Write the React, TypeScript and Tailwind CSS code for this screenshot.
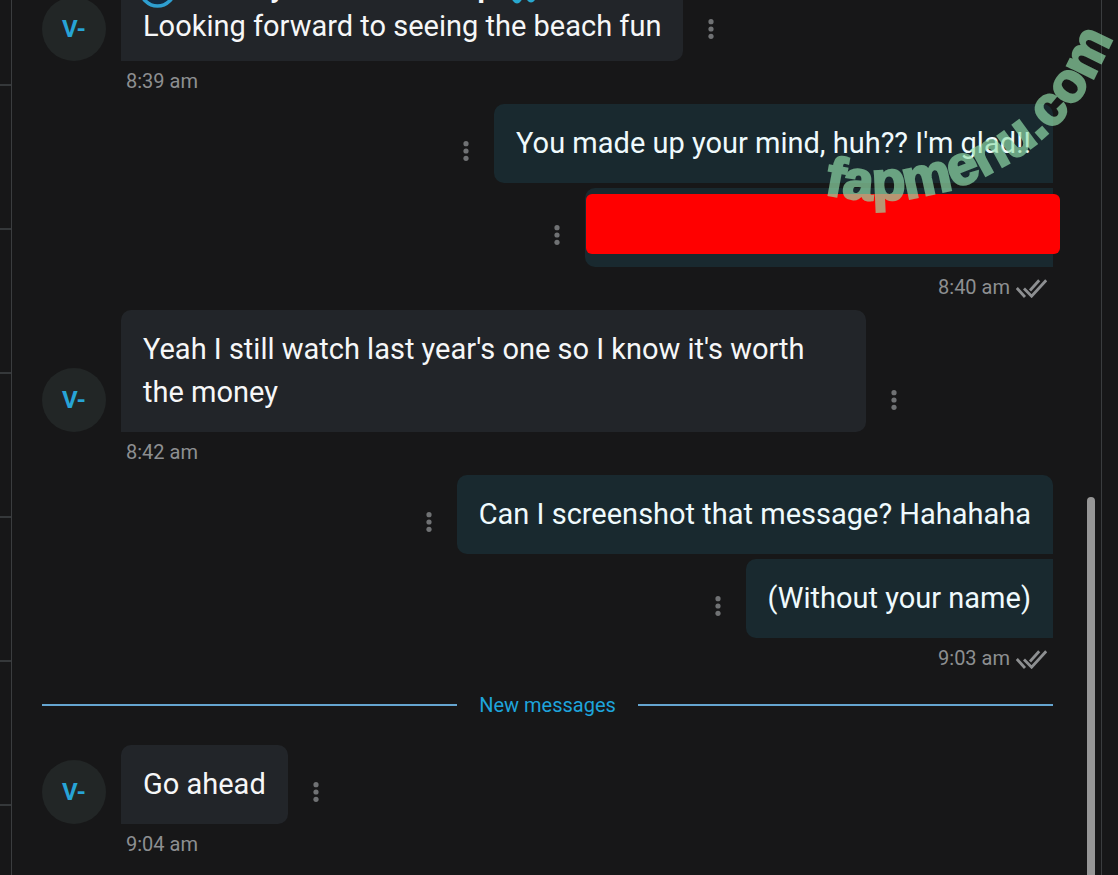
import React from "react";

function Dots() {
  return (
    <button aria-label="Message options" className="flex h-16 w-14 shrink-0 items-center justify-center text-[#707274]">
      <svg width="6" height="22" viewBox="0 0 6 22" fill="currentColor" aria-hidden="true">
        <circle cx="3" cy="3.7" r="2.6" />
        <circle cx="3" cy="11" r="2.6" />
        <circle cx="3" cy="18.3" r="2.6" />
      </svg>
    </button>
  );
}

function Avatar() {
  return (
    <div className="flex size-16 shrink-0 items-center justify-center rounded-full bg-[#222626] text-[24px] font-bold text-[#27a4d6]">
      V-
    </div>
  );
}

function Incoming({ time, clipped, children }: { time: string; clipped?: boolean; children: React.ReactNode }) {
  return (
    <div>
      <div className="flex items-end">
        <Avatar />
        <div
          className={`ml-[15px] max-w-[745px] rounded-[10px] rounded-bl-none bg-[#222529] px-[22px] pt-[18px] text-[#f6f7f8] ${clipped ? "pb-[13px]" : "pb-[18px]"}`}
        >
          {children}
        </div>
        <Dots />
      </div>
      <p className="mb-[2px] ml-[84px] text-[20px] leading-[41px] text-[#8d8f91]">{time}</p>
    </div>
  );
}

function Sent({ first, redacted, children }: { first?: boolean; redacted?: boolean; children?: React.ReactNode }) {
  return (
    <div className="flex items-end justify-end">
      <Dots />
      <div
        className={`relative rounded-l-[10px] bg-[#19292f] px-[22px] pt-[18px] pb-[18px] text-[#effafd] ${first ? "rounded-tr-[10px]" : ""} ${redacted ? "h-[79px] w-[468px]" : ""}`}
      >
        {children}
        {redacted && <div className="absolute -right-[7px] bottom-[13px] left-px h-[60px] rounded-[6px] bg-[#ff0000]" />}
      </div>
    </div>
  );
}

function Receipt({ time }: { time: string }) {
  return (
    <div className="mb-[2px] flex items-center justify-end gap-[6px] pr-[6px] text-[20px] leading-[41px] text-[#8d8f91]">
      <span>{time}</span>
      <svg width="31" height="20" viewBox="0 0 31 20" fill="none" stroke="currentColor" strokeWidth="2.8" role="img" aria-label="Read">
        <path d="M.8 10 9 19M8 10.5 15.6 18.2 30.2 2.2M14 12.5 23.2 2.2" />
      </svg>
    </div>
  );
}

function Watermark() {
  return (
    <svg
      width="318"
      height="230"
      viewBox="800 0 318 230"
      className="pointer-events-none absolute top-0 right-0 overflow-visible"
    >
      <path id="arc" d="M824 194A250 250 0 0 0 1128 -50" fill="none" />
      <text className="font-['Liberation_Sans',sans-serif] text-[55px] font-bold" fill="#95e2ad" stroke="#95e2ad" strokeWidth="2.4" opacity="0.66">
        <textPath href="#arc">fapmenu.com</textPath>
      </text>
    </svg>
  );
}

const ticks = [229, 373, 517, 661, 805];

export default function App() {
  return (
    <div className="relative flex h-screen overflow-hidden bg-[#171718] font-[Roboto,sans-serif] text-[29px] leading-[43px]">
      <aside className="w-3 shrink-0 border-r border-[#3b3d3f]">
        <div className="h-[86px] border-b-2 border-[#35383a]" />
        {ticks.map((t) => (
          <div key={t} className="h-36 border-b-2 border-[#35383a]" />
        ))}
      </aside>
      <main className="flex min-w-0 flex-1 flex-col pr-[34px] pl-[30px]">
        <div className="-mt-[49px]">
          <Incoming time="8:39 am" clipped>
            <div className="flex h-9 leading-9 font-bold">
              <svg width="30" height="36" viewBox="0 0 30 36" className="overflow-visible" aria-hidden="true">
                <circle cx="14.5" cy="20" r="17" fill="#12293f" stroke="#2e9fd0" strokeWidth="3.6" />
              </svg>
              <span className="ml-[97px]">y</span>
              <span className="ml-[193px]">p</span>
              <svg width="28" height="36" viewBox="0 0 28 36" className="ml-4 overflow-visible" fill="#28a8cf" aria-hidden="true">
                <path d="M-1 26 3 32Q7 37 11 32L15 26ZM13 26 17 31Q21 36 25 31L29 26Z" />
              </svg>
            </div>
            <p>Looking forward to seeing the beach fun</p>
          </Incoming>
        </div>
        <div className="flex flex-col gap-[5px]">
          <Sent first>You made up your mind, huh?? I'm glad!!</Sent>
          <Sent redacted />
        </div>
        <Receipt time="8:40 am" />
        <Incoming time="8:42 am">
          <p>Yeah I still watch last year's one so I know it's worth the money</p>
        </Incoming>
        <div className="flex flex-col gap-[5px]">
          <Sent first>Can I screenshot that message? Hahahaha</Sent>
          <Sent>(Without your name)</Sent>
        </div>
        <Receipt time="9:03 am" />
        <div className="mt-[9px] mb-[25px] flex items-center gap-[22px] text-[20px] leading-[30px] text-[#1ea4dc]">
          <div className="h-[2px] flex-1 bg-[#65a5d0]" />
          New messages
          <div className="h-[2px] flex-1 bg-[#65a5d0]" />
        </div>
        <Incoming time="9:04 am">
          <p>Go ahead</p>
        </Incoming>
      </main>
      <div className="flex w-[15px] shrink-0 flex-col border-r border-[#3b3d3f]">
        <div className="mt-[497px] w-2 flex-1 rounded-t-full bg-[#969696]" />
      </div>
      <div className="w-4 shrink-0" />
      <Watermark />
    </div>
  );
}
